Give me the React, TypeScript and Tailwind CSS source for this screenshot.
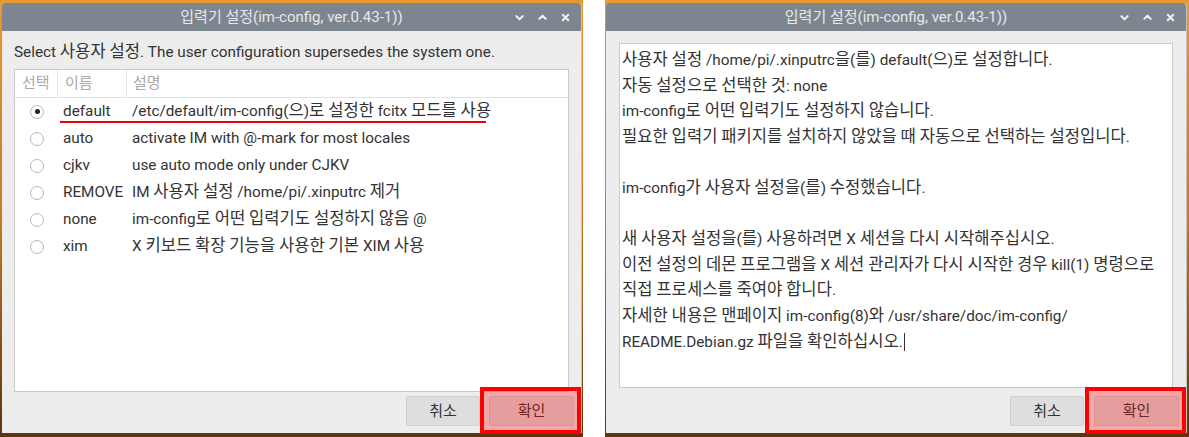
import { ReactNode } from 'react'

const rows = [
  { name: 'default', desc: '/etc/default/im-config(으)로 설정한 fcitx 모드를 사용', selected: true },
  { name: 'auto', desc: 'activate IM with @-mark for most locales' },
  { name: 'cjkv', desc: 'use auto mode only under CJKV' },
  { name: 'REMOVE', desc: 'IM 사용자 설정 /home/pi/.xinputrc 제거' },
  { name: 'none', desc: 'im-config로 어떤 입력기도 설정하지 않음 @' },
  { name: 'xim', desc: 'X 키보드 확장 기능을 사용한 기본 XIM 사용' },
]

const messages = [
  '사용자 설정 /home/pi/.xinputrc을(를) default(으)로 설정합니다.',
  '자동 설정으로 선택한 것: none',
  'im-config로 어떤 입력기도 설정하지 않습니다.',
  '필요한 입력기 패키지를 설치하지 않았을 때 자동으로 선택하는 설정입니다.',
  '',
  'im-config가 사용자 설정을(를) 수정했습니다.',
  '',
  '새 사용자 설정을(를) 사용하려면 X 세션을 다시 시작해주십시오.',
  '이전 설정의 데몬 프로그램을 X 세션 관리자가 다시 시작한 경우 kill(1) 명령으로',
  '직접 프로세스를 죽여야 합니다.',
  '자세한 내용은 맨페이지 im-config(8)와 /usr/share/doc/im-config/',
]

// hangul in the original renders a bit wider than the latin text
function Ko({ t }: { t: string }) {
  const parts = t.split(/([\uAC00-\uD7A3\u3131-\u318E]+)/)
  return (
    <>
      {parts.map((p, i) =>
        i % 2 === 1 ? (
          <span key={i} className="text-[16.6px]">
            {p}
          </span>
        ) : (
          <span key={i}>{p}</span>
        )
      )}
    </>
  )
}

function TitleIcon({ d }: { d: string }) {
  return (
    <div className="w-[23px] h-full flex items-center justify-center">
      <svg width="11" height="11" viewBox="0 0 12 12" fill="none">
        <path d={d} stroke="#f2f3f4" strokeWidth="2.2" strokeLinecap="round" strokeLinejoin="round" />
      </svg>
    </div>
  )
}

function Window({ children }: { children: ReactNode }) {
  return (
    <div className="relative flex flex-col h-[430px] bg-[#ededed] rounded-t-[3px] border-r border-[#c4c4c4]">
      <div className="grid grid-cols-[1fr_auto_1fr] h-[28px] bg-[#7d868f] rounded-t-[3px] items-center">
        <div />
        <div className="text-[15px] text-[#e6e8ea] whitespace-nowrap">
          입력기 설정(im-config, ver.0.43-1))
        </div>
        <div className="flex justify-end h-full pr-[4px]">
          <TitleIcon d="M2.5 4.5l3.5 3.5 3.5-3.5" />
          <TitleIcon d="M2.5 7.5l3.5-3.5 3.5 3.5" />
          <TitleIcon d="M3 3l6 6M9 3l-6 6" />
        </div>
      </div>
      {children}
      {/* red highlight annotation */}
      <div className="absolute right-0 bottom-[-1px] w-[101px] h-[47px] border-4 border-[#ff0000] bg-[#ff00004a]" />
    </div>
  )
}

function Buttons({ gap }: { gap: string }) {
  return (
    <div className={`flex justify-end ${gap} pr-[7px]`}>
      <button className="w-[74px] h-[30px] rounded-[2px] border border-[#cfcfcf] bg-[#dedede] text-[15px] text-[#333]">
        취소
      </button>
      <button className="w-[85px] h-[30px] rounded-[2px] border border-[#cfcfcf] bg-[#dedede] text-[15px] text-[#333]">
        확인
      </button>
    </div>
  )
}

function Radio({ on }: { on?: boolean }) {
  return (
    <div className="w-[14px] h-[14px] rounded-full border border-[#b8b8b8] bg-white flex items-center justify-center">
      {on ? <div className="w-[5px] h-[5px] rounded-full bg-[#222]" /> : null}
    </div>
  )
}

export default function App() {
  return (
    <div className="flex w-[1189px] h-[437px] bg-white font-[Roboto,'Noto_Sans_CJK_KR',sans-serif] overflow-hidden">
      {/* left screenshot */}
      <div className="w-[583px] h-[437px] pt-[3px] pl-[2px] pr-[1px] bg-linear-to-b from-[#e8992f] via-[#c97a22] to-[#5a3510]">
        <Window>
          <div className="flex flex-col px-[12px]">
            <div className="pt-[11px] h-[31px] leading-[20px] text-[15.3px] text-[#333] whitespace-nowrap">
              <Ko t="Select 사용자 설정. The user configuration supersedes the system one." />
            </div>
            <div className="relative mt-[7px] h-[323px] border border-[#c9c9c9] bg-white">
              <div className="flex h-[28px] border-b border-[#e2e2e2] text-[15px] text-[#a9a9a9]">
                <div className="w-[43px] px-[7px] flex items-center border-r border-[#e6e6e6]">선택</div>
                <div className="w-[69px] px-[7px] flex items-center border-r border-[#e6e6e6]">이름</div>
                <div className="flex-1 px-[6px] flex items-center">설명</div>
              </div>
              {rows.map((r) => (
                <div key={r.name} className="flex h-[27px] items-center text-[15.3px] text-[#333]">
                  <div className="w-[43px] pl-[15px] flex items-center">
                    <Radio on={r.selected} />
                  </div>
                  <div className="w-[69px] pl-[5px] whitespace-nowrap">{r.name}</div>
                  <div className="flex-1 pl-[5px] whitespace-nowrap">
                    <Ko t={r.desc} />
                  </div>
                </div>
              ))}
              {/* red underline annotation */}
              <div className="absolute left-[45px] top-[51px] w-[426px] h-[2px] bg-[#e8000b]" />
            </div>
          </div>
          <div className="mt-[4px]">
            <Buttons gap="gap-[9px]" />
          </div>
        </Window>
      </div>

      <div className="w-[22px]" />

      {/* right screenshot */}
      <div className="w-[584px] h-[437px] pt-[3px] pl-[1px] pr-[2px] bg-linear-to-b from-[#e8992f] via-[#c97a22] to-[#5a3510]">
        <Window>
          <div className="flex flex-col px-[13px] pt-[12px]">
            <div className="h-[345px] w-[554px] border border-[#c9c9c9] bg-white pt-[3px] pl-[2px] text-[15.3px] leading-[25.6px] text-[#333]">
              {messages.map((m, i) => (
                <div key={i} className="h-[25.6px] whitespace-nowrap">
                  <Ko t={m} />
                </div>
              ))}
              <div className="h-[25.6px] whitespace-nowrap">
                <Ko t="README.Debian.gz 파일을 확인하십시오." />
                <span className="inline-block w-px h-[18px] bg-[#333] ml-[1px] align-[-4px]" />
              </div>
            </div>
          </div>
          <div className="mt-[8px]">
            <Buttons gap="gap-[10px]" />
          </div>
        </Window>
      </div>
    </div>
  )
}
